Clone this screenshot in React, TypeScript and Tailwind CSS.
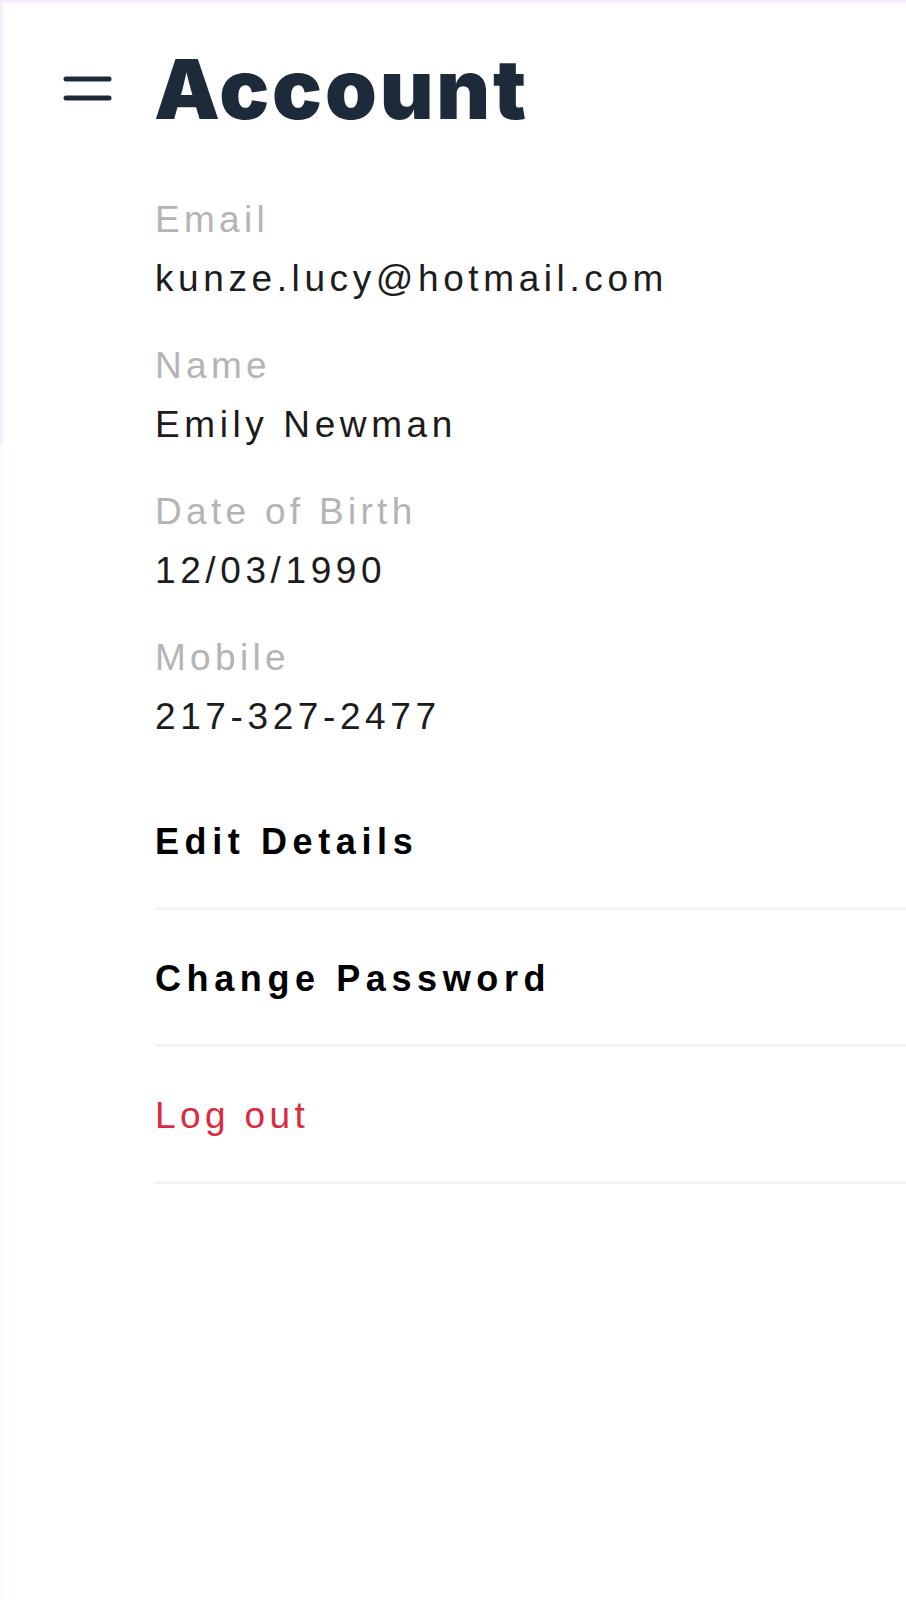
const fields = [
  { label: "Email", value: "kunze.lucy@hotmail.com" },
  { label: "Name", value: "Emily Newman" },
  { label: "Date of Birth", value: "12/03/1990" },
  { label: "Mobile", value: "217-327-2477" },
];

const actions = [
  { title: "Edit Details", danger: false },
  { title: "Change Password", danger: false },
  { title: "Log out", danger: true },
];

const MenuIcon = () => (
  <svg width="49" height="28" viewBox="0 0 49 28" className="shrink-0">
    <line x1="3" y1="4" x2="46" y2="4" stroke="#1d2a3a" strokeWidth="5" strokeLinecap="round" />
    <line x1="3" y1="23" x2="46" y2="23" stroke="#1d2a3a" strokeWidth="5" strokeLinecap="round" />
  </svg>
);

const App = () => {
  return (
    <div
      className="min-h-[1600px] w-full bg-white flex"
      style={{ fontFamily: '"Liberation Sans", Arial, sans-serif' }}
    >
      <div className="w-[3px] shrink-0 flex flex-col">
        <div className="h-[444px] bg-[#f7eefc]" />
        <div className="flex-1 bg-[#f6fcfe]" />
      </div>
      <div className="flex-1 flex flex-col">
        <div className="h-[3px] bg-[#f7eefc]" />
        <div className="flex items-center gap-[42px] pl-[60px] pt-[44px]">
          <MenuIcon />
          <h1
            className="text-[83px] leading-[84px] font-black tracking-[2.8px] text-[#1d2a3a]"
            style={{ fontFamily: "Inter, sans-serif" }}
          >
            Account
          </h1>
        </div>

        <div className="pl-[152px] mt-[67px] flex flex-col gap-[43px]">
          {fields.map((f) => (
            <div key={f.label} className="flex flex-col gap-[15px]">
              <p className="text-[37px] leading-[44px] tracking-[4.3px] text-[#b4b4b4]">
                {f.label}
              </p>
              <p className="text-[37px] leading-[44px] tracking-[4.6px] text-[#1c1c1c]">
                {f.value}
              </p>
            </div>
          ))}
        </div>

        <div className="pl-[152px] mt-[34px] flex flex-col">
          {actions.map((a) => (
            <div
              key={a.title}
              className="pt-[47px] pb-[43px] border-b-[3px] border-[#f3f3f3]"
            >
              {a.danger ? (
                <p className="text-[37px] leading-[44px] tracking-[4.4px] text-[#dc2b40]">
                  {a.title}
                </p>
              ) : (
                <p className="text-[36px] leading-[44px] font-bold tracking-[5.6px] text-black">
                  {a.title}
                </p>
              )}
            </div>
          ))}
        </div>
      </div>
    </div>
  );
};

export default App;
